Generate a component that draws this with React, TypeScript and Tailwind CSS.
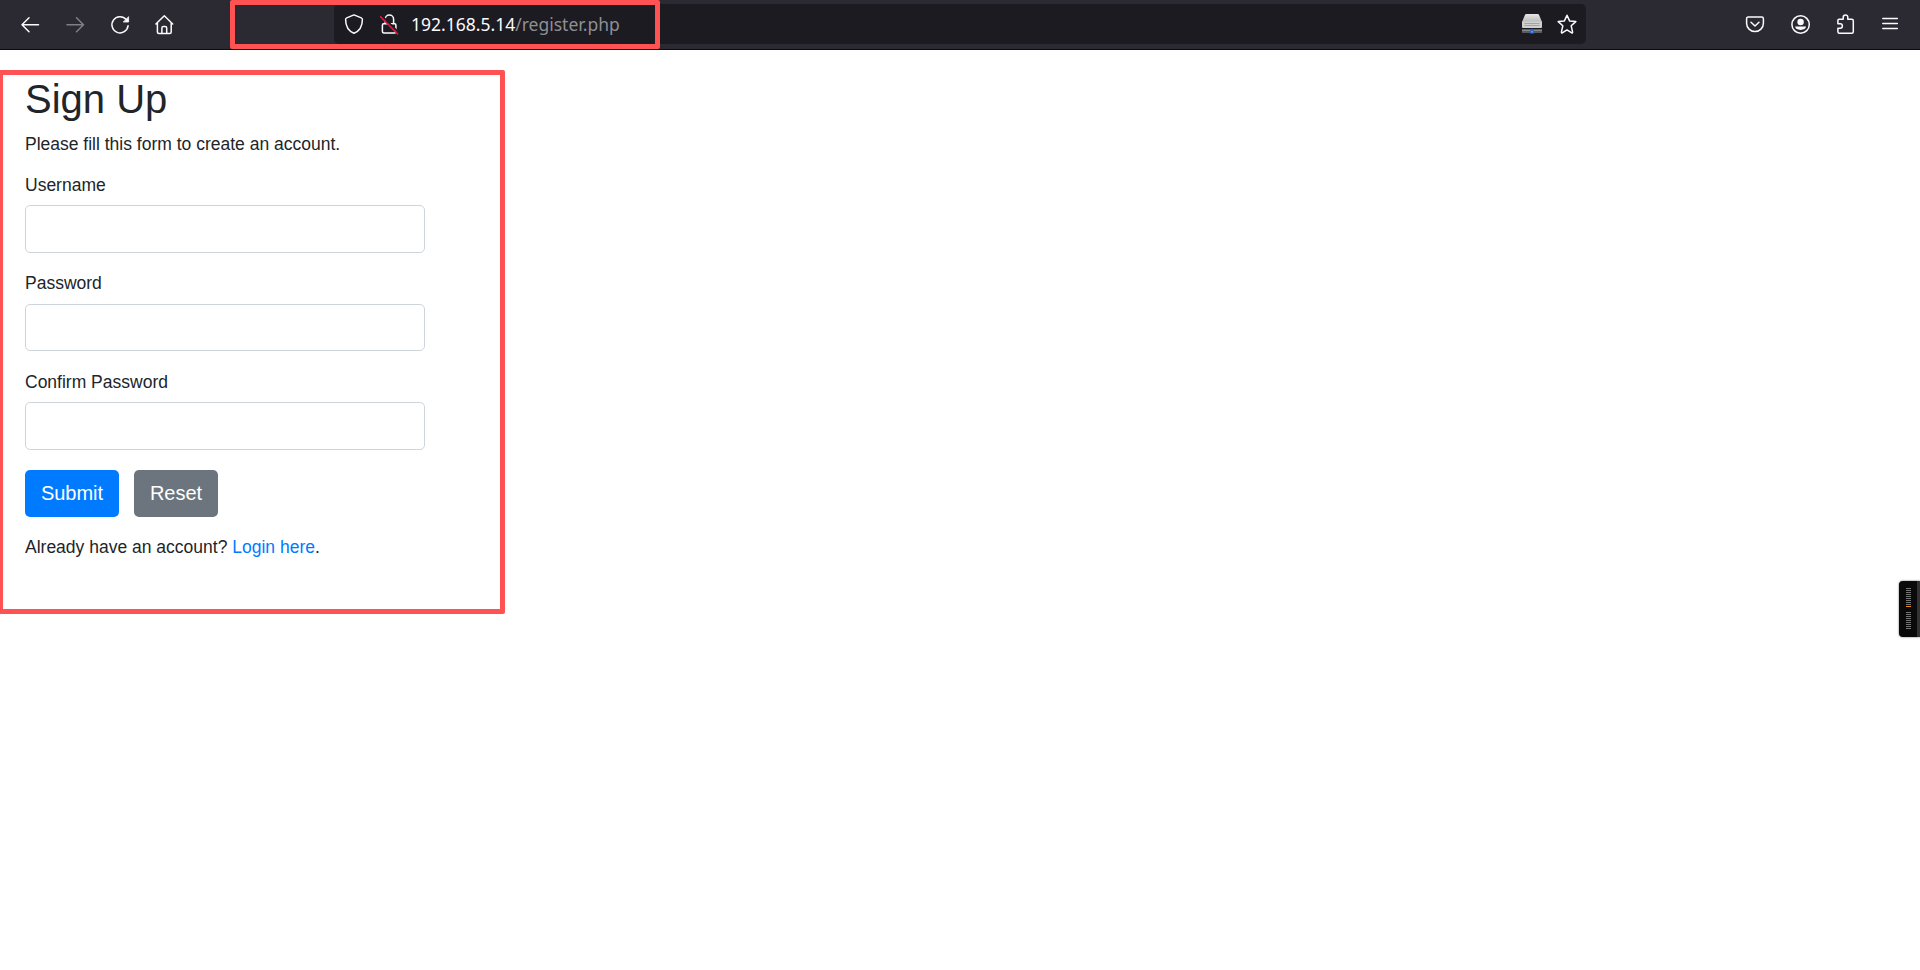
import { ReactNode } from "react";

interface IconProps {
  children: ReactNode;
  className?: string;
}

interface FieldProps {
  label: string;
  name: string;
  type?: string;
}

const Icon = ({ children, className = "text-[#fbfbfe]" }: IconProps) => (
  <svg
    width="20"
    height="20"
    viewBox="0 0 20 20"
    fill="none"
    stroke="currentColor"
    strokeWidth="1.5"
    strokeLinecap="round"
    strokeLinejoin="round"
    className={`shrink-0 overflow-visible ${className}`}
  >
    {children}
  </svg>
);

const NavButtons = () => (
  <nav className="flex w-[334px] shrink-0 gap-[25px] pl-5">
    <Icon>
      <path d="M9 3.7 2 10.7l7 7M2 10.7h16.5" />
    </Icon>
    <Icon className="text-[#807f85]">
      <path d="m11.5 3.7 7 7-7 7M18.5 10.7H2" />
    </Icon>
    <Icon>
      <path d="M16.2 5.5A8.1 8.1 0 1 0 18.1 11.7" />
      <path d="M18.6 3v5h-5z" fill="currentColor" strokeWidth="0.8" />
    </Icon>
    <Icon>
      <path d="M.9 10 9.3 1.8l8.4 8.2M2.4 8.7v9.2c0 .9.6 1.5 1.5 1.5h10.8c.9 0 1.5-.6 1.5-1.5V8.7" />
      <path d="M6.9 19.2V14c0-.9.6-1.5 1.5-1.5h1.8c.9 0 1.5.6 1.5 1.5v5.2" />
    </Icon>
  </nav>
);

const DriveIcon = () => (
  <svg width="20" height="20" viewBox="0 0 20 20" className="shrink-0">
    <defs>
      <linearGradient id="drive" x1="0" y1="0" x2="0" y2="1">
        <stop offset="0" stopColor="#e6e6e6" />
        <stop offset="1" stopColor="#b9b9b9" />
      </linearGradient>
    </defs>
    <path d="M4.5 0h11c1 0 1.5.5 1.800 1.500L20 8H0l2.700-6.500C3 .5 3.500 0 4.500 0z" fill="url(#drive)" />
    <path d="M0 7.500h20v5.500a1 1 0 0 1-1 1H1a1 1 0 0 1-1-1z" fill="#cfcfcf" />
    <path d="M2.500 9.500h15M2.500 11.500h15" stroke="#a3a3a3" />
    <rect y="15" width="20" height="4" fill="#5b5b5e" />
    <path d="M0 16.500h20" stroke="#88888a" />
    <path d="M10 14.500l2.200 2.500v2.500H7.800V17z" fill="#2864cf" />
    <rect x="9" y="17" width="2" height="1.500" fill="#5b9dff" />
  </svg>
);

const AddressBar = () => (
  <div className="flex h-10 w-[1252px] items-center rounded-[5px] bg-[#1c1b22] pl-[10px] pr-[9px]">
    <Icon>
      <path d="M10 .9 17.3 3.9c.7.3 1.1.7 1.1 1.5 0 6.2-2.6 11.4-8.4 13.8C4.2 16.8 1.6 11.6 1.6 5.4c0-.8.4-1.2 1.1-1.5z" />
    </Icon>
    <Icon className="ml-[15px] text-[#fbfbfe]">
      <path d="M6.2 9.7V5.2a4.2 4.2 0 0 1 8.4 0v4.5M4.7 9.7h11c.7 0 1.2.5 1.2 1.2v6.7c0 .9-.6 1.5-1.5 1.5H4.9c-.9 0-1.5-.6-1.5-1.5v-6.4c0-.9.5-1.5 1.3-1.5z" />
      <path d="m2.7 1.7 17 17" stroke="#1c1b22" strokeWidth="2" />
      <path d="m1.6 2.9 17 17" stroke="#e5173f" />
    </Icon>
    <p className="ml-3 whitespace-nowrap font-['Noto_Sans',sans-serif] text-[17.5px] leading-6 text-[#8f8e94]">
      <span className="text-[#fbfbfe]">192.168.5.14</span>/register.php
    </p>
    <div className="ml-auto flex gap-[15px]">
      <DriveIcon />
      <Icon>
        <path d="m10 1.2 2.6 5.7 6.2.7-4.6 4.2 1.4 6.3c.1.7-.4 1-.9.7L10 15.9l-4.7 2.9c-.5.3-1 0-.9-.7l1.4-6.3L1.2 7.6l6.2-.7z" />
      </Icon>
    </div>
  </div>
);

const ToolbarActions = () => (
  <div className="ml-auto flex gap-[25px] pr-5">
    <Icon>
      <path d="M3.2 3h13.5c1 0 1.7.7 1.7 1.7v4.5a8.4 8.4 0 0 1-16.8 0V4.7C1.6 3.7 2.2 3 3.2 3z" />
      <path d="m6 8.2 4 3.8 4-3.8" />
    </Icon>
    <Icon>
      <circle cx="10.6" cy="10.5" r="8.7" />
      <g fill="currentColor" stroke="none">
        <circle cx="10.6" cy="8" r="3.2" />
        <path d="M5.2 12.6h10.8c0 2-2.4 3.3-5.4 3.3s-5.4-1.3-5.4-3.3z" />
      </g>
    </Icon>
    <Icon>
      <path d="M4 5.3h4.2V3.2a2.3 2.3 0 0 1 4.6 0v2.1h4c.9 0 1.5.6 1.5 1.5v10.9c0 .9-.6 1.5-1.5 1.5H4.4c-.9 0-1.5-.6-1.5-1.5v-3.5h2.3a2.2 2.2 0 0 0 0-4.4H2.9V6.5c0-.7.4-1.2 1.1-1.2z" />
    </Icon>
    <Icon>
      <path d="M2.8 4.5h14.5M2.8 9.5h14.5M2.8 14.5h14.5" />
    </Icon>
  </div>
);

const Field = ({ label, name, type = "text" }: FieldProps) => (
  <div className="mb-5">
    <label htmlFor={name} className="block h-[31.1px] pt-[0.75px] leading-5">
      {label}
    </label>
    <input
      id={name}
      name={name}
      type={type}
      className="block h-[47.5px] w-[400px] rounded-[5px] border border-[#ced4da] bg-white px-[15px] text-xl"
    />
  </div>
);

const SignUpForm = () => (
  <main className="w-[450px] p-[25px] leading-5">
    <h2 className="mb-[10px] text-[40px] font-medium leading-[48px]">Sign Up</h2>
    <p className="mb-5 pt-px">Please fill this form to create an account.</p>
    <form onSubmit={(event) => event.preventDefault()}>
      <Field label="Username" name="username" />
      <Field label="Password" name="password" type="password" />
      <Field label="Confirm Password" name="confirm_password" type="password" />
      <div className="mb-5 flex gap-[15px] text-xl text-white">
        <button type="submit" className="h-[47px] w-[94px] rounded-[5px] bg-[#007bff] pb-px">
          Submit
        </button>
        <button type="reset" className="h-[47px] w-[84px] rounded-[5px] bg-[#6c757d] pb-px">
          Reset
        </button>
      </div>
      <p>
        Already have an account?{" "}
        <a href="#" className="text-[#007bff]">
          Login here
        </a>
        .
      </p>
    </form>
  </main>
);

const MeterBars = () => (
  <div className="flex flex-col gap-px">
    {Array.from({ length: 9 }, (_, i) => (
      <div key={i} className="h-px w-[5px] bg-[#777]" />
    ))}
  </div>
);

const SideHandle = () => (
  <aside className="absolute right-0 top-[581px] flex h-14 w-[21px] flex-col rounded-l-[4px] border-r-[3px] border-[#333] bg-[#0a0a0a] pl-[7px] pt-[7px] shadow-[0_0_2px_#555]">
    <MeterBars />
    <div className="mb-[5px] mt-px h-px w-[5px] bg-[#f08c0c]" />
    <MeterBars />
  </aside>
);

export default function App() {
  return (
    <div className="relative h-[970px] w-[1920px] overflow-hidden bg-white font-['Liberation_Sans',Arial,sans-serif] text-[17.5px] text-[#212529]">
      <header className="flex h-[50px] items-center border-b border-[#0c0c0d] bg-[#2b2a33] pb-px">
        <NavButtons />
        <AddressBar />
        <ToolbarActions />
      </header>
      <SignUpForm />
      <SideHandle />

      {/* highlight frames */}
      <div className="absolute left-[229.5px] top-0 h-[49px] w-[430px] rounded-[2px] border-[5px] border-[#ff5252]" />
      <div className="absolute -left-[2px] top-[69.5px] h-[544.5px] w-[507px] rounded-[2px] border-[5px] border-[#ff5252]" />
    </div>
  );
}
